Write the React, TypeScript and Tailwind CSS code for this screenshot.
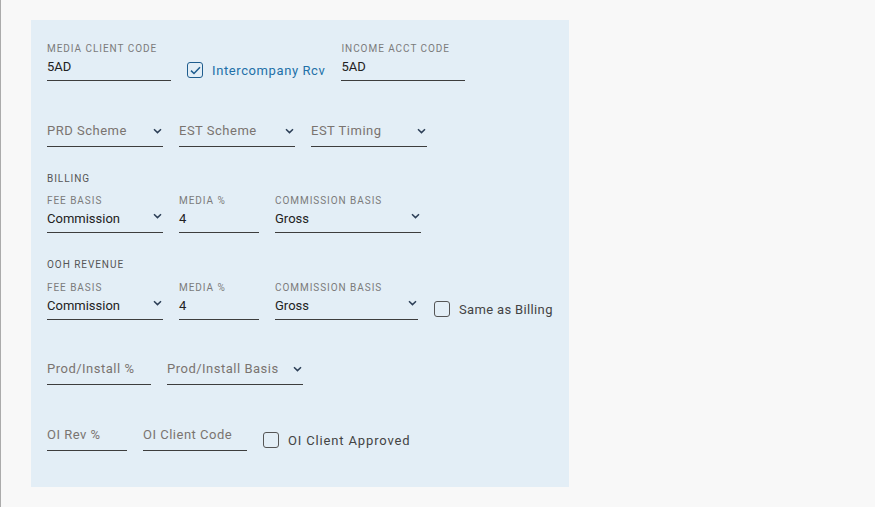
import React from 'react';

const font = { fontFamily: 'Roboto, "Noto Sans", sans-serif' };

const Chevron = () => (
  <svg width="9" height="6" viewBox="0 0 9 6" className="shrink-0">
    <path d="M1 1.2 L4.5 4.6 L8 1.2" fill="none" stroke="#2d3f57" strokeWidth="1.5" />
  </svg>
);

interface FieldProps {
  label?: string;
  value?: string;
  placeholder?: string;
  width: string;
  select?: boolean;
}

const LabeledField = ({ label, value, width, select }: FieldProps) => (
  <div className={`flex flex-col ${width}`}>
    <div className="h-[12px] text-[10px] leading-[12px] uppercase tracking-[0.95px] text-[#7b7b7b] whitespace-nowrap">
      {label}
    </div>
    <div className="h-[26px] border-b border-[#3d3d3d] flex items-start justify-between pt-[2px]">
      <span className="text-[13px] leading-[20px] text-[#222]">{value}</span>
      {select && (
        <span className="pt-[4px] pr-[1px]">
          <Chevron />
        </span>
      )}
    </div>
  </div>
);

const PlainField = ({ placeholder, width, select }: FieldProps) => (
  <div className={`h-[26px] border-b border-[#3d3d3d] flex items-start justify-between pt-[1px] ${width}`}>
    <span className="text-[13px] leading-[18px] tracking-[0.5px] text-[#7a7470] whitespace-nowrap">{placeholder}</span>
    {select && (
      <span className="pt-[6px] pr-[1px]">
        <Chevron />
      </span>
    )}
  </div>
);

const Check = ({ label, checked, spacing }: { label: string; checked?: boolean; spacing: string }) => (
  <label className="flex items-center gap-[9px] mb-[1px]">
    <span
      className={`w-[16px] h-[16px] rounded-[3px] border-[1.5px] flex items-center justify-center ${
        checked ? 'border-[#1f5d8e]' : 'border-[#555]'
      }`}
    >
      {checked && (
        <svg width="11" height="9" viewBox="0 0 11 9">
          <path d="M1 4.6 L4 7.5 L10 1.2" fill="none" stroke="#1f5d8e" strokeWidth="1.5" />
        </svg>
      )}
    </span>
    <span
      className={`pt-[2px] text-[13px] leading-[18px] whitespace-nowrap ${spacing} ${
        checked ? 'text-[#2270a8]' : 'text-[#444]'
      }`}
    >
      {label}
    </span>
  </label>
);

const SectionTitle = ({ children }: { children: React.ReactNode }) => (
  <div className="h-[12px] text-[10px] leading-[12px] uppercase tracking-[0.95px] text-[#555]">{children}</div>
);

export default function App() {
  return (
    <div className="min-h-[507px] bg-[#f8f8f8] border-l border-[#ababab] pt-[20px] pl-[30px]" style={font}>
      <div className="w-[538px] h-[467px] bg-[#e3eef6] pt-[23px] pl-[16px]">
        {/* codes */}
        <div className="flex items-end">
          <LabeledField label="Media Client Code" value="5AD" width="w-[124px]" />
          <div className="ml-[16px] mr-[16px]">
            <Check label="Intercompany Rcv" checked spacing="tracking-[0.6px]" />
          </div>
          <LabeledField label="Income Acct Code" value="5AD" width="w-[124px]" />
        </div>

        {/* schemes */}
        <div className="flex gap-[16px] mt-[40px]">
          <PlainField placeholder="PRD Scheme" width="w-[116px]" select />
          <PlainField placeholder="EST Scheme" width="w-[116px]" select />
          <PlainField placeholder="EST Timing" width="w-[116px]" select />
        </div>

        {/* billing */}
        <div className="mt-[26px]">
          <SectionTitle>Billing</SectionTitle>
          <div className="flex gap-[16px] mt-[10px]">
            <LabeledField label="Fee Basis" value="Commission" width="w-[116px]" select />
            <LabeledField label="Media %" value="4" width="w-[80px]" />
            <LabeledField label="Commission Basis" value="Gross" width="w-[146px]" select />
          </div>
        </div>

        {/* ooh revenue */}
        <div className="mt-[26px]">
          <SectionTitle>OOH Revenue</SectionTitle>
          <div className="flex items-end gap-[16px] mt-[11px]">
            <LabeledField label="Fee Basis" value="Commission" width="w-[116px]" select />
            <LabeledField label="Media %" value="4" width="w-[80px]" />
            <LabeledField label="Commission Basis" value="Gross" width="w-[143px]" select />
            <Check label="Same as Billing" spacing="tracking-[0.35px]" />
          </div>
        </div>

        {/* prod / install */}
        <div className="flex gap-[16px] mt-[39px]">
          <PlainField placeholder="Prod/Install %" width="w-[104px]" />
          <PlainField placeholder="Prod/Install Basis" width="w-[136px]" select />
        </div>

        {/* oi */}
        <div className="flex items-end gap-[16px] mt-[40px]">
          <PlainField placeholder="OI Rev %" width="w-[80px]" />
          <PlainField placeholder="OI Client Code" width="w-[104px]" />
          <Check label="OI Client Approved" spacing="tracking-[0.85px]" />
        </div>
      </div>
    </div>
  );
}
